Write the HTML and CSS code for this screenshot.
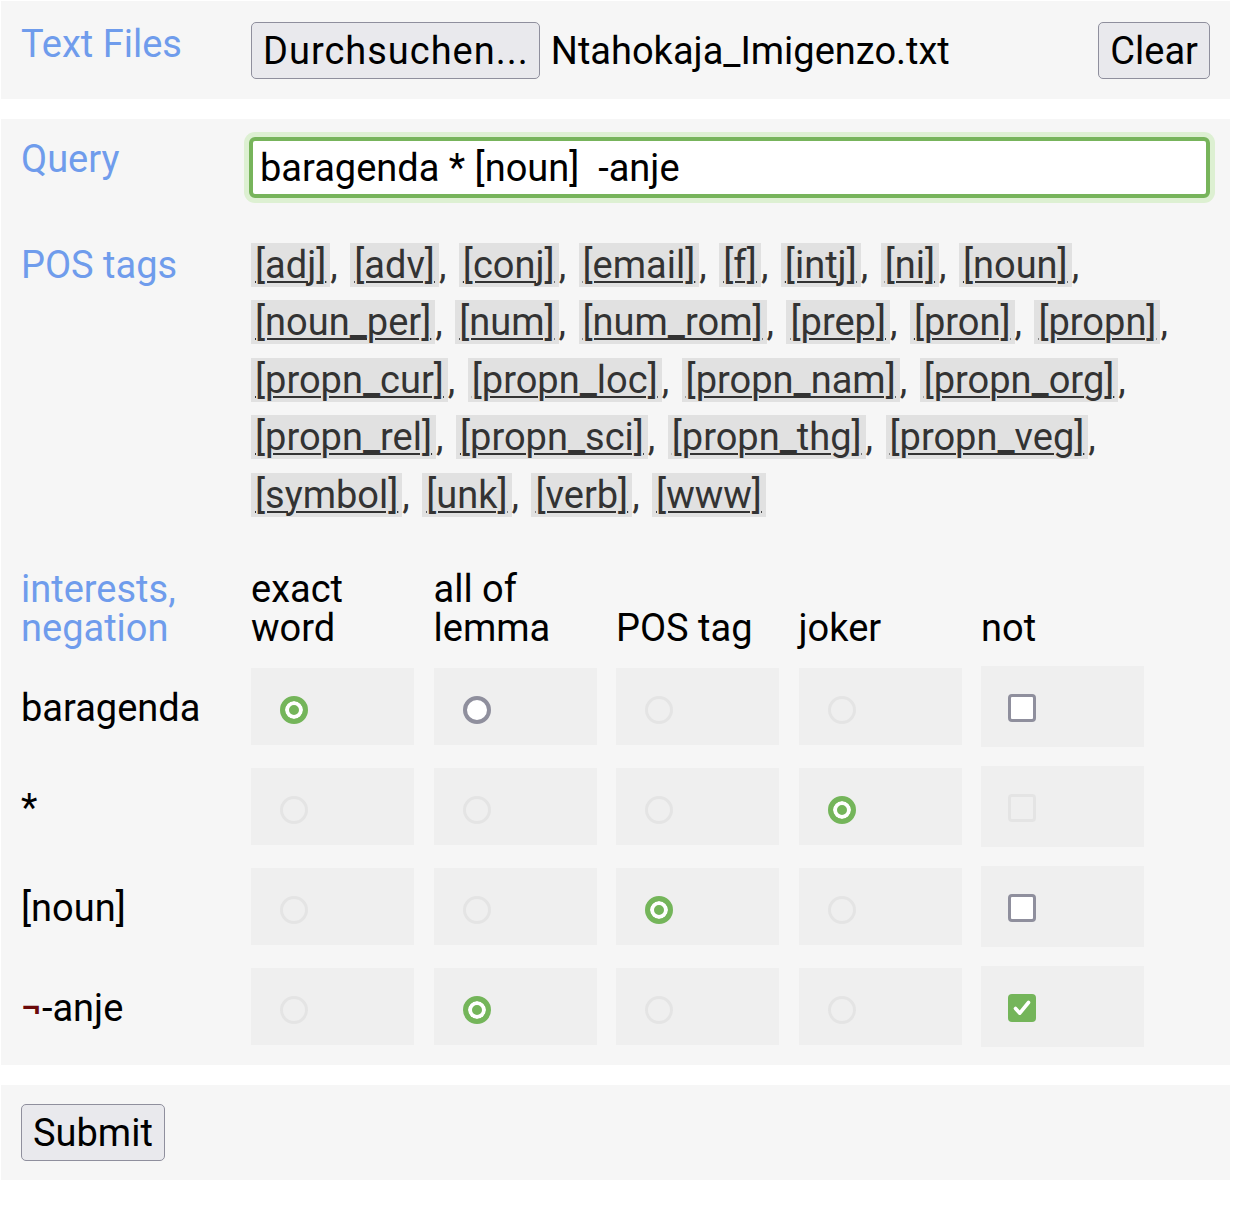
FILE: index.html
```html
<!DOCTYPE html>
<html lang="en">
<head>
<meta charset="utf-8">
<title>Query form</title>
<link rel="stylesheet" href="styles.css">
</head>
<body>
<form class="page">
  <section class="panel panel-files">
    <div class="label">Text Files</div>
    <div class="files">
      <span class="btn btn-browse">Durchsuchen...</span>
      <span class="filename">Ntahokaja_Imigenzo.txt</span>
      <span class="btn btn-clear">Clear</span>
    </div>
  </section>

  <section class="panel panel-main">
    <div class="label">Query</div>
    <div class="query-wrap"><input class="query" type="text" value="baragenda * [noun]  -anje"></div>

    <div class="label label-pos">POS tags</div>
    <div class="tags"><a class="tag">[adj]</a>, <a class="tag">[adv]</a>, <a class="tag">[conj]</a>, <a class="tag">[email]</a>, <a class="tag">[f]</a>, <a class="tag">[intj]</a>, <a class="tag">[ni]</a>, <a class="tag">[noun]</a>, <a class="tag">[noun_per]</a>, <a class="tag">[num]</a>, <a class="tag">[num_rom]</a>, <a class="tag">[prep]</a>, <a class="tag">[pron]</a>, <a class="tag">[propn]</a>, <a class="tag">[propn_cur]</a>, <a class="tag">[propn_loc]</a>, <a class="tag">[propn_nam]</a>, <a class="tag">[propn_org]</a>, <a class="tag">[propn_rel]</a>, <a class="tag">[propn_sci]</a>, <a class="tag">[propn_thg]</a>, <a class="tag">[propn_veg]</a>, <a class="tag">[symbol]</a>, <a class="tag">[unk]</a>, <a class="tag">[verb]</a>, <a class="tag">[www]</a></div>

    <div class="matrix">
      <div class="label head-label">interests, negation</div>
      <div class="col-head">exact word</div>
      <div class="col-head">all of lemma</div>
      <div class="col-head">POS tag</div>
      <div class="col-head">joker</div>
      <div class="col-head">not</div>

      <div class="row-label">baragenda</div>
      <div class="cell"><span class="radio on"></span></div>
      <div class="cell"><span class="radio off"></span></div>
      <div class="cell"><span class="radio dis"></span></div>
      <div class="cell"><span class="radio dis"></span></div>
      <div class="cell cell-not"><span class="check"></span></div>

      <div class="row-label">*</div>
      <div class="cell"><span class="radio dis"></span></div>
      <div class="cell"><span class="radio dis"></span></div>
      <div class="cell"><span class="radio dis"></span></div>
      <div class="cell"><span class="radio on"></span></div>
      <div class="cell cell-not"><span class="check dis"></span></div>

      <div class="row-label">[noun]</div>
      <div class="cell"><span class="radio dis"></span></div>
      <div class="cell"><span class="radio dis"></span></div>
      <div class="cell"><span class="radio on"></span></div>
      <div class="cell"><span class="radio dis"></span></div>
      <div class="cell cell-not"><span class="check"></span></div>

      <div class="row-label"><span class="neg">¬</span>-anje</div>
      <div class="cell"><span class="radio dis"></span></div>
      <div class="cell"><span class="radio on"></span></div>
      <div class="cell"><span class="radio dis"></span></div>
      <div class="cell"><span class="radio dis"></span></div>
      <div class="cell cell-not"><span class="check on"><svg viewBox="0 0 28 28" width="28" height="28"><path d="M7.5 14.5 L11.8 19.2 L20.5 8.5" fill="none" stroke="#fff" stroke-width="3.6" stroke-linecap="round" stroke-linejoin="round"/></svg></span></div>
    </div>
  </section>

  <section class="panel-submit">
    <button class="btn btn-submit" type="button">Submit</button>
  </section>
</form>
</body>
</html>
```

FILE: styles.css
```css
* {
  box-sizing: border-box;
}

body {
  margin: 0;
  background: #ffffff;
  font-family: Roboto, "Liberation Sans", sans-serif;
  font-size: 38px;
  color: #000000;
}

.page {
  width: 1230px;
  padding: 1px 0 0 1px;
}

.panel {
  background: #f6f6f6;
  display: grid;
  grid-template-columns: 230px 959px;
  padding: 21px 20px 20px 20px;
}

.label {
  color: #6f9cec;
  line-height: normal;
}

/* Text files */
.files {
  display: flex;
  align-items: center;
  height: 57px;
}

.btn {
  display: inline-flex;
  align-items: center;
  height: 57px;
  padding: 0 11px;
  background: #e9e9ed;
  border: 1px solid #8f8f9d;
  border-radius: 5px;
  font-family: inherit;
  font-size: 38px;
  color: #000000;
}

.btn-browse {
  letter-spacing: 1px;
  padding: 0 10px 0 11px;
}

.filename {
  margin-left: 11px;
}

.btn-clear {
  margin-left: auto;
}

/* Query */
.panel-main {
  margin-top: 20px;
  padding-top: 18px;
  padding-bottom: 20px;
}

.query-wrap {
  height: 61px;
}

.query {
  display: block;
  margin-left: -2px;
  width: 961px;
  height: 61px;
  padding: 0 7px;
  border: 4px solid #77b45b;
  border-radius: 6px;
  box-shadow: 0 0 0 5px #ddf0d2;
  background: #ffffff;
  font-family: inherit;
  font-size: 38px;
  color: #000000;
  outline: none;
}

/* POS tags */
.label-pos {
  margin-top: 38.5px;
  line-height: 57.5px;
}

.tags {
  margin-top: 38.5px;
  line-height: 57.5px;
  color: #333333;
  word-spacing: 3px;
}

.tag {
  background: #e1e1e1;
  color: #333333;
  padding: 0 4px;
  text-decoration: underline;
  text-decoration-thickness: 2px;
  text-underline-offset: 3px;
}

/* Matrix */
.matrix {
  grid-column: 1 / -1;
  margin-top: 43px;
  display: grid;
  grid-template-columns: 210.5px repeat(5, 163px);
  grid-template-rows: 78px repeat(4, 77px);
  column-gap: 19.5px;
  row-gap: 23px;
}

.head-label {
  align-self: end;
  line-height: 39px;
  margin-bottom: -3px;
}

.col-head {
  align-self: end;
  line-height: 39px;
  margin-bottom: -3px;
}

.row-label {
  align-self: center;
  line-height: normal;
  margin-top: 2px;
}

.neg {
  color: #6b0a0a;
  font-weight: 700;
}

.cell {
  background: #efefef;
  padding: 28px 0 0 29px;
}

.cell-not {
  margin: -2px 0;
  padding: 28px 0 0 27px;
}

.radio {
  display: block;
  width: 28px;
  height: 28px;
  border-radius: 50%;
}

.radio.on {
  border: 5px solid #74b55a;
  background: #74b55a;
  box-shadow: inset 0 0 0 4px #ffffff;
}

.radio.off {
  border: 4px solid #8f8f9d;
  background: #ffffff;
}

.radio.dis {
  border: 3px solid #e4e4e4;
  background: #efefef;
}

.check {
  display: block;
  width: 28px;
  height: 28px;
  border: 3px solid #8f8f9d;
  border-radius: 4px;
  background: #ffffff;
}

.check.dis {
  border-color: #e4e4e4;
  background: #efefef;
}

.check.on {
  border: none;
  background: #74b55a;
}

.check svg {
  display: block;
}

/* Submit */
.panel-submit {
  margin-top: 20px;
  background: #f6f6f6;
  padding: 19px 20px;
}

.btn-submit {
  cursor: pointer;
}
```
